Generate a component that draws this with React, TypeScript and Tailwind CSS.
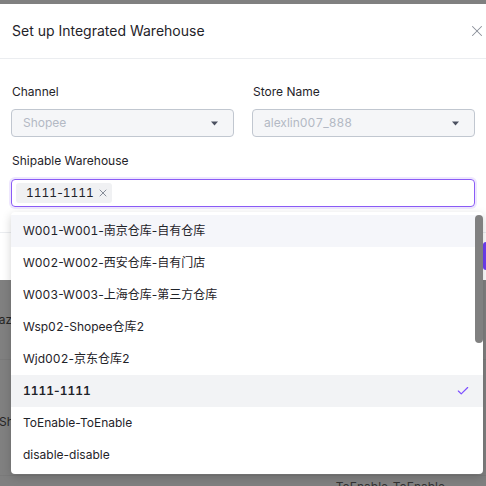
import React from 'react';
import { X, Check } from 'lucide-react';

const options = [
  'W001-W001-南京仓库-自有仓库',
  'W002-W002-西安仓库-自有门店',
  'W003-W003-上海仓库-第三方仓库',
  'Wsp02-Shopee仓库2',
  'Wjd002-京东仓库2',
  '1111-1111',
  'ToEnable-ToEnable',
  'disable-disable',
];

const font = { fontFamily: 'Inter, "Noto Sans CJK SC", sans-serif' };

// digits in the reference are tabular, the rest is proportional
const Num: React.FC<{ text: string }> = ({ text }) => (
  <>
    {text.split(/(\d+)/).map((part, i) =>
      /^\d+$/.test(part) ? (
        <span key={i} className="tabular-nums">
          {part}
        </span>
      ) : (
        <React.Fragment key={i}>{part}</React.Fragment>
      )
    )}
  </>
);

const Caret = () => (
  <svg width="7" height="5" viewBox="0 0 7 5" className="shrink-0">
    <path d="M0 0.5h7L3.5 4.5z" fill="#4b5160" />
  </svg>
);

const App: React.FC = () => {
  return (
    <div
      className="relative h-[486px] w-[486px] overflow-hidden bg-[#808080] text-[12px] leading-[16px]"
      style={font}
    >
      {/* page behind the overlay */}
      <div className="flex flex-col pt-[280px] text-[#262626]">
        <div className="flex h-[80px] items-center border-b border-[#7a7a7a]">
          <span className="-ml-[8px]">Lazada</span>
        </div>
        <div className="flex h-[116px] items-start border-b border-[#7a7a7a] pt-[54px]">
          <span className="-ml-[1px]">Shopee</span>
        </div>
        <div className="flex justify-end pr-[41px] pt-[3px]">
          <span className="text-[#333]">ToEnable-ToEnable</span>
        </div>
      </div>

      {/* modal */}
      <div className="absolute left-0 top-[4px] w-[600px] bg-white">
        <div className="flex h-[55px] w-[486px] items-center justify-between border-b border-[#ebedf0] pl-[12px] pr-0">
          <span className="text-[14px] text-[#1f2329]">Set up Integrated Warehouse</span>
          <X className="h-[18px] w-[18px] text-[#8a8f99]" strokeWidth={1.4} />
        </div>

        <div className="flex w-[486px] flex-col px-[11px] pt-[25px]">
          <div className="grid grid-cols-2 gap-[18px]">
            <div className="flex flex-col gap-[9px]">
              <label className="pl-[1px] text-[#1f2329]">Channel</label>
              <div className="flex h-[28px] items-center justify-between rounded-[4px] border border-[#c1c7d0] bg-[#f5f6f8] pl-[11px] pr-[15px]">
                <span className="text-[#b3b9c4]">Shopee</span>
                <Caret />
              </div>
            </div>
            <div className="flex flex-col gap-[9px]">
              <label className="pl-[1px] text-[#1f2329]">Store Name</label>
              <div className="flex h-[28px] items-center justify-between rounded-[4px] border border-[#c1c7d0] bg-[#f5f6f8] pl-[11px] pr-[15px]">
                <span className="text-[#b3b9c4]">
                  <Num text="alexlin007_888" />
                </span>
                <Caret />
              </div>
            </div>
          </div>

          <label className="mt-[16px] pl-[1px] text-[#1f2329]">Shipable Warehouse</label>
          <div className="mt-[10px] flex h-[28px] items-center rounded-[4px] border border-[#8b5cf6] px-[4px] ring-2 ring-[#8b5cf6]/15">
            <span className="flex h-[20px] items-center gap-[3px] rounded-[3px] bg-[#f0f1f3] pl-[10px] pr-[3px] text-[#1f2329]">
              <span>
                <Num text="1111-1111" />
              </span>
              <X className="h-[12px] w-[12px] text-[#6b7280]" strokeWidth={1.6} />
            </span>
          </div>
        </div>

        <div className="mt-[25px] h-px w-full bg-[#ebedf0]" />
        <div className="flex h-[47px] items-start pl-[483px] pt-[9px]">
          <div className="h-[28px] w-[80px] rounded-[3px] bg-[#6f3ff5]" />
        </div>
      </div>

      {/* dropdown */}
      <div className="absolute left-[11px] top-[212px] w-[472px] rounded-[4px] bg-white py-[3px] shadow-[0_3px_10px_rgba(0,0,0,0.18)]">
        <div className="flex flex-col">
          {options.map((o, i) => {
            const selected = o === '1111-1111';
            return (
              <div
                key={o}
                className={`flex h-[32px] items-center justify-between px-[12px] ${
                  i === 0 ? 'bg-[#f5f6fa]' : selected ? 'bg-[#f2f3f5]' : ''
                } ${selected ? 'font-semibold' : ''} text-[#1f2329]`}
              >
                <span>
                  <Num text={o} />
                </span>
                {selected && <Check className="mr-[1px] h-[14px] w-[14px] text-[#7c4dff]" strokeWidth={2} />}
              </div>
            );
          })}
        </div>
        <div className="absolute right-0 top-[3px] h-[128px] w-[8px] rounded-full bg-[#808080]" />
      </div>
    </div>
  );
};

export default App;
